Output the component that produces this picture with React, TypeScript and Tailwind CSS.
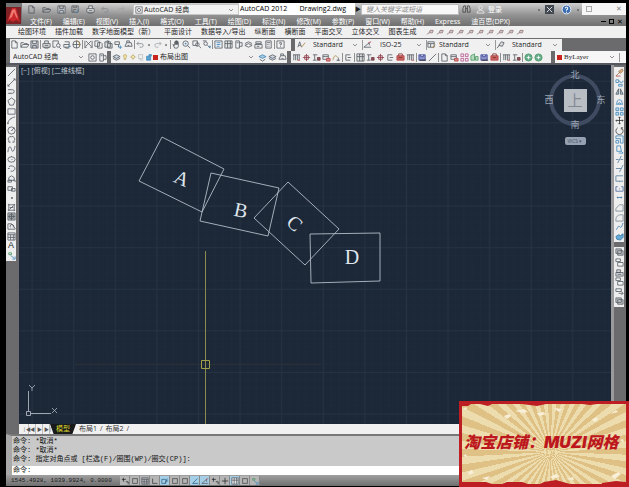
import { useState } from 'react';

type Shape = { d: string; s?: string; f?: string };

const INK = '#555b63';
const BLUE = '#3f86b8';
const RED = '#b8464a';
const GREEN = '#4a9a62';

const icons: Record<string, Shape[]> = {
  new: [{ d: 'M2 1h4l2 2v6H2zM6 1v2h2' }],
  open: [{ d: 'M1 8V3h3l1 1h3v1M1 8l2-3h7L8 8z' }],
  save: [{ d: 'M1 1h8v8H1zM3 1v3h4V1M3 9V6h4v3', f: '#c5c9cf' }],
  saveAs: [{ d: 'M1 1h7v7H1zM3 1v2h3V1M3 8V5h3' }, { d: 'M5 9l4-4', s: BLUE }],
  print: [{ d: 'M1 4h8v4H1zM3 4V1h4v3M3 8v1h4V8M3 6h4', f: '#e3e3e3' }],
  preview: [{ d: 'M1 1h6v3M1 1v7h3' }, { d: 'M5 6a2 2 0 1 0 4 0a2 2 0 1 0-4 0M8 8l2 2' }],
  publish: [{ d: 'M3 2h5v3M2 5h6v3H2zM4 8v1h4' }, { d: 'M7 7h3', s: BLUE }],
  globe: [{ d: 'M1 5a4 4 0 1 0 8 0a4 4 0 1 0-8 0M5 1v8M1 5h8' }, { d: 'M5 1a4 4 0 0 1 3 6', s: '#b08a3a' }],
  cut: [{ d: 'M2 1l6 6M8 1L2 7M1 8h2M7 8h2M1 1v8M9 1v8' }],
  copy: [{ d: 'M1 1h4l1 1v5H1zM4 3h4l1 1v5H4z' }],
  paste: [{ d: 'M1 2h6v6H1zM3 1h2v2H3M4 4h5v5H4z', f: '#dedede' }],
  match: [{ d: 'M1 2h5v3H1zM5 5v3' }, { d: 'M5 8h4M7 6v4', s: BLUE }],
  block: [{ d: 'M1 7l2-4h5l1 4zM3 3V1h3v2M4 6h2' }],
  undo: [{ d: 'M3 2L1 4l2 2M1 4h5a2 2 0 0 1 0 4H4', s: '#85898e' }],
  redo: [{ d: 'M7 2l2 2-2 2M9 4H4a2 2 0 0 0 0 4h2', s: '#a3a6aa' }],
  drop: [{ d: 'M3 4h4L5 7z', f: '#444', s: 'none' }],
  pan: [{ d: 'M3 9L1 5l2 1V2h1v3V1h1v4V1h1v4V2h1v5L6 9z' }],
  zoom: [{ d: 'M1 4a3 3 0 1 0 6 0a3 3 0 1 0-6 0M6 6l3 3' }, { d: 'M3 4h2M4 3v2', s: BLUE }],
  zoomWin: [{ d: 'M1 1h5v5H1zM4 5a2 2 0 1 0 4 0a2 2 0 1 0-4 0M8 7l2 2' }],
  zoomPrev: [{ d: 'M2 4a2 2 0 1 0 4 0a2 2 0 1 0-4 0M6 6l3 3M1 1h4' }, { d: 'M7 7h3v2', s: BLUE }],
  props: [{ d: 'M1 1h8v8H1z', f: '#e9eef4' }, { d: 'M3 3h4M3 5h4M3 7h3', s: BLUE }],
  sheet: [{ d: 'M1 1h8v8H1zM1 4h8M4 1v8M7 1v8', f: '#e4e4e4' }],
  palette: [{ d: 'M2 1h4v8H2zM6 3h3v4H6M3 3h2' }],
  sheets: [{ d: 'M1 6l4-2 4 2-4 2zM1 4l4-2 4 2' }],
  markup: [{ d: 'M2 2h6v2H2zM1 5h8v4H1zM3 7h3' }],
  calc: [{ d: 'M2 1h6v8H2zM3 3h4M3 5h1M5 5h1M3 7h1M5 7h1' }],
  help: [{ d: 'M1 1h8v8H1zM4 4V3h2v2H5v1M5 7v1' }],
  text: [{ d: 'M1 8l2-6 2 6M2 6h2' }, { d: 'M5 8l4-5', s: '#a8813c' }],
  dim: [{ d: 'M1 8h8M1 8l6-5M7 3v3' }, { d: 'M6 3l3-1', s: RED }],
  table: [{ d: 'M1 2h7v6H1zM1 4h7M4 4v4' }, { d: 'M6 9l3-4', s: '#a8813c' }],
  leader: [{ d: 'M1 9l3-3M3 6l3-4 3 1-2 4z', f: '#ddd' }],
  gear: [{ d: 'M1 1h8v8H1zM3 5a2 2 0 1 0 4 0a2 2 0 1 0-4 0' }],
  layers: [{ d: 'M1 4l4-2 4 2-4 2zM1 6l4 2 4-2', f: '#cfd8e2' }],
  bulb: [{ d: 'M3 4a2 2 0 1 1 4 0L6 6v2H4V6z', s: '#b6a15a', f: '#f4e8ad' }],
  sun: [{ d: 'M3 5a2 2 0 1 0 4 0a2 2 0 1 0-4 0M5 1v1M5 8v1M1 5h1M8 5h1', s: '#b6a15a', f: '#f7ecb9' }],
  freeze: [{ d: 'M2 2h5v5H2zM4 7v2h4', s: '#b5b9bd' }],
  lock: [{ d: 'M2 4h5v5H2zM5 4V2h3v2', s: BLUE, f: '#5aa2d0' }],
  layPrev: [{ d: 'M1 4l4-2 4 2-4 2z', s: BLUE, f: '#a7cbe2' }, { d: 'M2 7l3 2 3-2' }],
  mkRed: [{ d: 'M1 2h6v5H1zM1 4h6', s: INK }, { d: 'M5 6h4v3H5z', s: RED, f: '#d98a88' }],
  mkFill: [{ d: 'M1 3h8v5H1z', s: RED, f: '#c9625d' }, { d: 'M3 3V1h4v2M3 5h4', s: '#7a2e2c' }],
  mkBars: [{ d: 'M1 2h8M2 2v6M4 2v6M6 2v6M8 2v6', s: INK }, { d: 'M6 8h3', s: RED }],
  mkCross: [{ d: 'M5 1v8M1 5h8M3 3h4v4H3z', s: '#8f3d4a' }],
  mkGreen: [{ d: 'M1 8V3l4-2v7zM6 8V4h3v4z', s: GREEN, f: '#b7d8c1' }],
  mkCurve: [{ d: 'M1 8c1-6 4-6 5-3', s: '#ad8c4a' }, { d: 'M5 8h4M7 5v4', s: INK }],
  mkText: [{ d: 'M1 2h5M3 2v6M1 8h4', s: INK }, { d: 'M6 5h3v3H6z', s: '#6b3c44', f: '#9a5058' }],
  mkFrame: [{ d: 'M7 2H2v6h5M4 5h4', s: INK }],
  mkPink: [{ d: 'M1 1h3v3H1zM6 1h3v3H6zM1 6h3v3H1zM6 6h3v3H6z', s: '#b7578f' }],
  mkBlue: [{ d: 'M1 2h7v6H1zM3 2v2h3V2', s: '#3d4696', f: '#8d94cd' }, { d: 'M2 8h7', s: '#222' }],
  mkDisc: [{ d: 'M1 5a4 4 0 1 0 8 0a4 4 0 1 0-8 0', s: GREEN, f: '#68ad8e' }, { d: 'M3 5h4M5 3v4', s: '#fff' }],
  line: [{ d: 'M1 9l8-8' }],
  xline: [{ d: 'M1 9l8-8M1 7v2h2M7 1h2v2' }],
  pline: [{ d: 'M1 3h5a2 2 0 0 1 0 4H3M1 7h3' }],
  polygon: [{ d: 'M5 1l4 3-2 5H3L1 4z' }],
  rect: [{ d: 'M1 2h8v6H1z' }],
  arc: [{ d: 'M1 9c0-5 4-7 8-8M1 7v2M4 3h1' }],
  circle: [{ d: 'M1 5a4 4 0 1 0 8 0a4 4 0 1 0-8 0M5 5l3-3M5 5h1' }],
  cloud: [{ d: 'M2 8V6a2 2 0 0 1 0-3a2 2 0 0 1 3-1a2 2 0 0 1 3 1a2 2 0 0 1 0 3v2H6M4 8H2' }],
  spline: [{ d: 'M1 8c1-8 3-7 4-3s3 2 4-4' }],
  ellipse: [{ d: 'M1 5a4 3 0 1 0 8 0a4 3 0 1 0-8 0M5 1v1M5 5h1' }],
  earc: [{ d: 'M2 3a4 3 0 1 1 2 5M1 5h2' }],
  insert: [{ d: 'M2 7V4l3-2 3 2v3zM1 7h4v2H1zM7 7h2v2' }],
  mkBlock: [{ d: 'M1 3h5v4H1zM5 5h4v3H5z' }],
  point: [{ d: 'M5 5h1v1H5z', f: INK }],
  hatch: [{ d: 'M1 2h8M1 8h8M2 1v8M8 1v8M3 5h4M3 7l4-4' }],
  gradient: [{ d: 'M1 1h8v8H1zM3 3h4v4H3zM1 5h8M5 1v8', f: '#b5b8bc' }],
  region: [{ d: 'M1 8V2h4l4 5v1zM4 6a2 2 0 1 1 3 0' }],
  grid: [{ d: 'M1 1h8v8H1zM1 3h8M1 6h8M4 3v6M7 3v6' }],
  addSel: [{ d: 'M2 2h3v2H2z', s: GREEN }, { d: 'M4 5l4 3M6 9h3V6', s: BLUE }],
  erase: [{ d: 'M1 9l5-5M4 4l4-3 1 2-3 3z', s: '#a0754b', f: '#dfb48e' }, { d: 'M1 9h5', s: RED }],
  copyObj: [{ d: 'M1 2h3v3H1zM5 3a2 2 0 1 0 4 0M4 7h4v2H4z', s: BLUE }],
  mirror: [{ d: 'M4 2v6H1zM6 2v6h3z', s: INK, f: '#a9c6dc' }],
  offset: [{ d: 'M1 8h8M2 8a3 5 0 0 1 6 0M4 8a1 2 0 0 1 2 0', s: BLUE }],
  array: [{ d: 'M1 1h3v3H1zM6 1h3v3H6zM1 6h3v3H1zM6 6h3v3H6z', s: BLUE, f: '#cfe3f1' }],
  move: [{ d: 'M5 1v8M1 5h8M4 2l1-1 1 1M4 8l1 1 1-1M2 4L1 5l1 1M8 4l1 1-1 1', s: '#333' }],
  rotate: [{ d: 'M3 2a4 4 0 1 0 4 0M7 2v2M7 2h2', s: '#444' }],
  scale: [{ d: 'M1 1h8v8H6V4H1zM1 6h3v3H1z', s: BLUE }],
  stretch: [{ d: 'M2 1h4l1 6H2zM4 9h5M7 7l2 2', s: BLUE }],
  trim: [{ d: 'M1 5h3M6 5h3M3 9l4-8', s: '#547a98' }],
  extend: [{ d: 'M1 5h6M5 9l4-8', s: '#547a98' }],
  breakAt: [{ d: 'M1 2h8M1 2v6h8M5 8v1', s: '#547a98' }],
  breakObj: [{ d: 'M1 3v5h8V3M1 3h2M7 3h2M5 5v1', s: '#48659c' }],
  join: [{ d: 'M2 5h6M3 4v2M7 4v2', s: '#3b78a8' }],
  chamfer: [{ d: 'M1 9V6l4-4h4v7z', s: '#7b8894' }],
  fillet: [{ d: 'M1 9V7a5 5 0 0 1 5-5h3v7z', s: '#7b8894' }],
  blend: [{ d: 'M1 8c2 1 2-5 4-3s2 1 4-4', s: '#3b78a8' }],
  explode: [{ d: 'M1 5l3-2 2 1 3-2v4L6 9 2 8z', s: '#2f78aa', f: '#6aa9d4' }],
  order1: [{ d: 'M1 1h6v5H1zM3 3h6v5H3z', f: '#c4c6ca' }],
  order2: [{ d: 'M1 1h5v3H1zM3 5h6v4H3z', f: '#f5f5f5' }],
  order3: [{ d: 'M2 2h4v3H2zM1 5h8v4H1zM3 7h4', f: '#d6d8db' }],
  annot: [{ d: 'M1 2h6v3H1zM4 7h5M7 5l2 2-2 2' }],
  pin: [{ d: 'M1 8l3-2M4 6l1-3h4L8 6z', s: '#8a6f70', f: '#d6c7c7' }],
  binoc: [{ d: 'M1 8V4l1-3h2v7zM6 8V1h2l1 3v4zM4 4h2', s: '#444' }],
  user: [{ d: 'M3 3a2 2 0 1 0 4 0a2 2 0 1 0-4 0M1 9c0-4 8-4 8 0z', s: '#eee' }],
  exch: [{ d: 'M0 0h10v10H0z', s: 'none', f: '#3f464e' }, { d: 'M2 2l6 6M8 2L2 8', s: '#fff' }],
  helpRound: [{ d: 'M1 5a4 4 0 1 0 8 0a4 4 0 1 0-8 0', s: '#e8eef8', f: '#3c6eb0' }, { d: 'M4 4V3h2v2H5v1M5 7v1', s: '#fff' }],
  snap: [{ d: 'M3 1v5M1 3h5M6 6h3v3', s: '#222' }],
  ortho: [{ d: 'M2 2v6h6', s: '#333' }],
  square: [{ d: 'M2 2h6v6H2z', s: '#444' }],
  osnap: [{ d: 'M1 3h5v5H1zM5 8l3-6M6 5h3', s: '#2b5f85' }],
  angle: [{ d: 'M8 2L2 8h7', s: '#2b5f85' }],
  plus: [{ d: 'M5 1v8M1 5h8', s: '#222' }],
};

function Icon({ name, size = 'size-[9px]' }: { name: string; size?: string }) {
  return (
    <svg viewBox="0 0 10 10" className={`${size} shrink-0`} aria-hidden="true">
      {icons[name].map((p, i) => (
        <path key={i} d={p.d} stroke={p.s ?? INK} fill={p.f ?? 'none'} strokeWidth="0.9" />
      ))}
    </svg>
  );
}

function Tool({ name, size, className = '' }: { name: string; size?: string; className?: string }) {
  return (
    <button type="button" aria-label={name} className={`flex shrink-0 items-center justify-center ${className}`}>
      <Icon name={name} size={size} />
    </button>
  );
}

// '|' in a tool list draws a divider
function ToolRun({ tools }: { tools: string[] }) {
  return (
    <div className="flex items-center gap-px">
      {tools.map((t, i) =>
        t === '|' ? (
          <span key={i} className="h-[9px] w-px bg-[#8f8f8f]" />
        ) : (
          <Tool key={i} name={t} size={t === 'drop' ? 'size-[6px]' : undefined} />
        ),
      )}
    </div>
  );
}

function Combo({ label, value, className = '' }: { label: string; value: string; className?: string }) {
  return (
    <div className={`flex items-center pr-1 ${className}`}>
      <select aria-label={label} className="w-full min-w-0 appearance-none bg-transparent text-[7px] leading-[10px] outline-none">
        <option>{value}</option>
      </select>
      <svg viewBox="0 0 6 4" className="h-1 w-[6px] shrink-0" aria-hidden="true">
        <path d="M1 1l2 2 2-2" fill="none" stroke="#777" strokeWidth="0.8" />
      </svg>
    </div>
  );
}

const quickTools = ['new', 'open', 'save', 'saveAs', 'print', 'undo', 'redo'];

const menus = ['文件(F)', '编辑(E)', '视图(V)', '插入(I)', '格式(O)', '工具(T)', '绘图(D)', '标注(N)', '修改(M)', '参数(P)', '窗口(W)', '帮助(H)', 'Express', '迪百思(DPX)'];

const plugins = ['绘图环境', '插件加载', '数字地面模型（新）', '平面设计', '数据导入/导出', '纵断面', '横断面', '平面交叉', '立体交叉', '图表生成'];

const standardTools = ['new', 'open', 'save', '|', 'print', 'preview', 'publish', 'globe', '|', 'cut', 'copy', 'paste', 'match', 'block', '|', 'undo', 'drop', 'redo', 'drop', '|', 'pan', 'zoom', 'zoomWin', 'zoomPrev', '|', 'props', 'sheet', 'palette', 'sheets', 'markup', 'calc', '|', 'help'];

const roadTools = ['mkBars', 'mkCross', 'mkText', 'mkRed', 'mkCurve', '|', 'mkFrame', '|', 'sheet', 'mkText', 'mkCross', 'mkFrame', 'mkFill', 'mkBars', '|', 'mkBlue', 'line', '|', 'new', 'mkRed', 'mkPink', 'mkGreen', 'mkBlue', 'mkFill', '|', 'mkBars', 'mkText', '|', 'mkDisc', 'mkDisc'];

const drawTools = ['line', 'xline', 'pline', 'polygon', 'rect', 'arc', 'circle', 'cloud', 'spline', 'ellipse', 'earc', 'insert', 'mkBlock', 'point', 'hatch', 'gradient', 'region', 'grid'];

const modifyTools = ['erase', 'copyObj', 'mirror', 'offset', 'array', 'move', 'rotate', 'scale', 'stretch', 'trim', 'extend', 'breakAt', 'breakObj', 'join', 'chamfer', 'fillet', 'blend', 'explode'];

const statusTools = [
  { name: 'snap', on: false },
  { name: 'square', on: false },
  { name: 'grid', on: false },
  { name: 'ortho', on: false },
  { name: 'osnap', on: true },
  { name: 'square', on: false },
  { name: 'square', on: false },
  { name: 'angle', on: true },
  { name: 'dim', on: true },
  { name: 'snap', on: false },
  { name: 'plus', on: false },
  { name: 'sheet', on: true },
  { name: 'square', on: false },
  { name: 'addSel', on: false },
];

const plots = [
  { id: 'A', points: '143,72 205,104 183,147 120,116', x: 163, y: 113, turn: 24 },
  { id: 'B', points: '192,108 260,123 249,171 181,156', x: 222, y: 145, turn: 12 },
  { id: 'C', points: '269,117 320,164 286,200 235,153', x: 276, y: 158, turn: 42 },
  { id: 'D', points: '291,169 361,168 361,216 292,218', x: 333, y: 192, turn: 0 },
];

function TitleBar() {
  return (
    <div className="flex h-[13px] items-center bg-linear-to-b from-[#cfcfcf] to-[#8e8e8e]">
      <div className="flex w-[111px] shrink-0 items-center justify-between pr-2 pl-[5px]">
        {quickTools.map((t) => (
          <Tool key={t} name={t} />
        ))}
      </div>
      <div className="flex h-[11px] w-[106px] shrink-0 items-center gap-px border border-[#c5c5c5] bg-[#f1f1f1] pl-px">
        <Icon name="gear" size="size-[8px]" />
        <Combo label="工作空间" value="AutoCAD 经典" className="w-full" />
      </div>
      <div className="flex h-[12px] w-[116px] shrink-0 items-center justify-between self-start bg-white pr-[9px] pl-px text-[7px] leading-[10px] whitespace-nowrap text-black">
        <span>AutoCAD 2012</span>
        <span>Drawing2.dwg</span>
      </div>
      <span className="w-[6px] shrink-0 text-center text-[6px]">▶</span>
      <input
        aria-label="搜索"
        placeholder="键入关键字或短语"
        className="h-[11px] w-[98px] shrink-0 border border-[#bbb] bg-[#f8f8f8] pl-1 text-[7px] italic outline-none placeholder:text-[#8b8b8b]"
      />
      <div className="flex flex-1 items-center pl-[3px]">
        <Tool name="binoc" />
        <a href="#login" className="ml-[5px] flex items-center gap-[3px] text-[7px] leading-[9px] text-white">
          <Icon name="user" />
          登录
        </a>
        <div className="mr-px ml-auto flex items-center gap-[3px]">
          <Tool name="drop" size="size-[6px]" />
          <Tool name="exch" />
          <Tool name="helpRound" size="ml-1 size-[11px]" />
          <Tool name="drop" size="size-[6px]" />
        </div>
      </div>
      <div className="flex h-[12px] w-[44px] shrink-0 items-center justify-between self-start bg-[#f6f6f6] px-[4px] text-[#888]">
        <button type="button" aria-label="最大化" className="size-[6px] border border-[#aaa]" />
        <button type="button" aria-label="关闭" className="text-[7px] leading-[10px]">✕</button>
      </div>
    </div>
  );
}

function MenuBar() {
  return (
    <nav className="flex h-[10px] items-center justify-between bg-linear-to-b from-[#8f8f8f] to-[#6f6f6f] pr-[3px] pl-[8px] text-[7px] leading-[9px] text-white">
      <div className="flex gap-[11px]">
        {menus.map((m) => (
          <button key={m} type="button" className="whitespace-nowrap">{m}</button>
        ))}
      </div>
      <div className="flex items-center gap-[3px] text-black">
        <button type="button" aria-label="最小化" className="h-px w-[5px] bg-black" />
        <button type="button" aria-label="还原" className="size-[5px] border border-black" />
        <button type="button" aria-label="关闭文档">✕</button>
      </div>
    </nav>
  );
}

function DrawingArea() {
  return (
    <main className="relative min-h-[359px] min-w-0 flex-1 overflow-hidden bg-[#1c2737]">
      <svg className="absolute inset-0 size-full" aria-label="图形">
        <defs>
          <pattern id="minor" width="8.3" height="8.3" x="4.3" y="7.6" patternUnits="userSpaceOnUse">
            <path d="M0.5 0v8.3M0 0.5h8.3" stroke="#1e2a3a" fill="none" />
          </pattern>
          <pattern id="major" width="41.6" height="41.6" x="12.6" y="15.8" patternUnits="userSpaceOnUse">
            <path d="M0.5 0v41.6M0 0.5h41.6" stroke="#243242" fill="none" />
          </pattern>
        </defs>
        <rect width="100%" height="100%" fill="url(#minor)" />
        <rect width="100%" height="100%" fill="url(#major)" />
        {plots.map((p) => (
          <g key={p.id}>
            <polygon points={p.points} fill="none" stroke="#b3bcc7" strokeWidth="0.9" />
            <text
              x={p.x}
              y={p.y}
              transform={`rotate(${p.turn} ${p.x} ${p.y})`}
              textAnchor="middle"
              dominantBaseline="central"
              className="fill-[#dfe5ec] font-['Liberation_Serif',serif] text-[20px]"
            >
              {p.id}
            </text>
          </g>
        ))}
        <path d="M56 299.5h246" stroke="#2a3034" />
        <path d="M186.5 186v400" stroke="#8b8b4c" />
        <path d="M182.5 295.5h8v8h-8z" fill="none" stroke="#a3a04a" />
      </svg>

      <span className="absolute top-px left-[2px] text-[7px] leading-[9px] text-[#c3cad3]">[−] [俯视] [二维线框]</span>

      <svg viewBox="0 0 36 36" className="absolute bottom-[5px] left-[5px] size-[36px]" aria-label="坐标系">
        <path d="M4.500 8v20M7 30.500h20M2.500 28.500h4v4h-4z" fill="none" stroke="#aeb6c0" strokeWidth="0.9" />
        <path d="M5 2l3 3 3-3M8 5v3M28 25l5 5M33 25l-5 5" fill="none" stroke="#aeb6c0" strokeWidth="0.8" />
      </svg>

      <div className="absolute top-[5px] right-[5px] grid w-[62px] grid-cols-[10px_42px_10px] items-center justify-items-center text-[9px] leading-[10px] text-[#9aa5b3]">
        <span className="z-10 col-start-2">北</span>
        <span className="z-10 col-start-1">西</span>
        <div className="-my-[6px] flex size-[52px] items-center justify-center rounded-full border-[4px] border-[#3f4b60]">
          <button type="button" className="size-[23px] bg-[#b9bdc4] text-[15px] leading-[20px] text-[#838993]">上</button>
        </div>
        <span className="z-10">东</span>
        <span className="z-10 col-start-2">南</span>
        <button type="button" className="col-start-2 mt-[7px] h-[8px] w-[21px] rounded-[2px] bg-[#96a1b1] text-[5px] leading-[8px] text-[#4d596a]">WCS ▾</button>
      </div>
    </main>
  );
}

function Banner() {
  return (
    <aside className="absolute right-0 bottom-0 h-[86px] w-[170px] overflow-hidden border-3 border-[#bd1e24] bg-[repeating-conic-gradient(from_2deg_at_54%_60%,#ecdcae_0deg_5deg,#dfc085_5deg_10deg)]">
      <svg viewBox="0 0 164 80" className="absolute inset-0 size-full" aria-hidden="true">
        <path
          d="M2 4l2-1 1 2-2 1zM42 12l5-2 2 2-4 3zM53 7l9-2 4 3-5 1zM75 9l6-1 3 2-7 2zM92 4l8 1-3 3zM130 16l4-3 2 2-3 3zM148 10l6-4 2 2zM6 68l4-2 2 3-5 2zM20 74l8-2-3 4zM88 73l6-3 4 2-7 3zM104 75l7-2 1 3zM149 72l7-4 3 2-6 5zM1 52l3-2 1 3zM158 36l3-1 1 4z"
          fill="#f8efd8"
        />
        <path d="M0 0h9l-3 2H0zM18 0h12l-4 2zM60 0h24l-9 2zM120 0h15l-7 1zM0 78h24l6 2H0zM45 78h15l6 2H40zM82 78l12-2 14 4H78zM140 79l14-2 10 1v2h-24z" fill="#bd1e24" />
      </svg>
      <p className="relative pt-[27px] pl-[2px] font-['Inter','Noto_Sans_CJK_SC',sans-serif] text-[16px] leading-[22px] font-black whitespace-nowrap text-[#bd171d] italic">
        淘宝店铺：MUZI网格
      </p>
    </aside>
  );
}

export default function App() {
  const [tab, setTab] = useState('模型');
  const [command, setCommand] = useState('');

  return (
    <div className="relative flex min-h-screen flex-col overflow-hidden bg-black pt-[3px] pr-[3px] pl-[6px] font-['Open_Sans','Noto_Sans_CJK_SC',sans-serif] text-[#1f1f1f]">
      <header>
        <div className="flex">
          <button type="button" aria-label="应用程序菜单" className="flex w-[16px] shrink-0 items-center justify-center bg-[#747474]">
            <svg viewBox="0 0 16 20" className="h-[20px] w-[16px]" aria-hidden="true">
              <path d="M0 2h15v17H0z" fill="#7e2024" />
              <path d="M1 17L6 3h4l4 14-4-2-3 2-3-2z" fill="#c8282c" />
              <path d="M6 5l-3 9 3-2 2-5 2 5 2 2L9 4z" fill="#f07a72" />
            </svg>
          </button>
          <div className="min-w-0 flex-1">
            <TitleBar />
            <MenuBar />
          </div>
        </div>

        <div className="flex h-[12px] items-center bg-[#f1f0f1] pl-[12px] text-[7px] leading-[10px]">
          <nav className="flex gap-[9px]">
            {plugins.map((p) => (
              <button key={p} type="button" className="whitespace-nowrap">{p}</button>
            ))}
          </nav>
          <div className="ml-[9px] flex items-center gap-[2px]">
            {Array.from({ length: 10 }, (_, i) => (
              <Tool key={i} name="pin" size="size-[8px]" />
            ))}
          </div>
        </div>

        <div className="flex h-[13px] items-center gap-[4px] bg-[#6b6b6d] pl-[4px]">
          <div className="flex h-[12px] w-[281px] shrink-0 items-center bg-[#f0f0f1]">
            <ToolRun tools={standardTools} />
          </div>
          <div className="flex h-[12px] items-center bg-[#f0f0f1] pl-[2px]">
            <Icon name="text" />
            <Combo label="文字样式" value="Standard" className="w-[57px] border-r border-[#999] pl-[7px]" />
            <Icon name="dim" />
            <Combo label="标注样式" value="ISO-25" className="w-[55px] border-r border-[#999] pl-[8px]" />
            <Icon name="table" />
            <Combo label="表格样式" value="Standard" className="w-[60px] border-r border-[#999] pl-[3px]" />
            <Icon name="leader" />
            <Combo label="多重引线样式" value="Standard" className="w-[57px] pl-[7px]" />
          </div>
        </div>

        <div className="flex h-[14px] items-center gap-[4px] border-b-2 border-[#55585e] bg-[#6b6b6d] pl-[4px]">
          <div className="flex h-[12px] w-[97px] shrink-0 items-center bg-[#f0f0f1] pl-[3px]">
            <Combo label="工作空间切换" value="AutoCAD 经典" className="w-[75px]" />
            <ToolRun tools={['gear', 'palette']} />
          </div>
          <div className="flex h-[12px] w-[176px] shrink-0 items-center bg-[#f0f0f1] pl-px">
            <Icon name="layers" />
            <div className="flex flex-1 items-center">
              <Icon name="bulb" size="size-[8px]" />
              <Icon name="sun" size="size-[8px]" />
              <Icon name="freeze" size="size-[8px]" />
              <Icon name="lock" size="size-[8px]" />
              <span className="mr-[2px] size-[5px] shrink-0 bg-[#c8231e]" />
              <Combo label="图层" value="布局出图" className="flex-1" />
            </div>
            <ToolRun tools={['layPrev', 'layers', 'block']} />
          </div>
          <div className="flex h-[12px] w-[260px] shrink-0 items-center bg-[#f0f0f1] pl-px">
            <ToolRun tools={roadTools} />
          </div>
          <div className="flex h-[12px] min-w-0 flex-1 items-center bg-[#f6f6f6] pl-[2px] font-['Liberation_Serif',serif]">
            <span className="mr-[2px] size-[5px] shrink-0 bg-[#c8231e]" />
            <Combo label="颜色" value="ByLayer" className="flex-1" />
            <span className="mr-[6px] h-[9px] w-px bg-[#999]" />
          </div>
        </div>
      </header>

      <div className="flex flex-1">
        <div className="flex w-[13px] shrink-0 flex-col bg-[#6b6b6d] pt-[2px] pr-[3px]">
          <div className="flex h-[194px] flex-col items-center justify-between bg-[#eeeeef] py-px">
            {drawTools.map((t) => (
              <Tool key={t} name={t} />
            ))}
            <button type="button" aria-label="多行文字" className="h-[9px] font-['Liberation_Sans',sans-serif] text-[9px] leading-[9px]">A</button>
            <Tool name="addSel" />
          </div>
        </div>
        <div className="flex min-w-0 flex-1 flex-col">
          <DrawingArea />
          <div className="flex h-[10px] items-center bg-[#f0f0f1] pl-[4px] text-[7px] leading-[10px]">
            <div className="flex gap-px text-[5px] text-[#555]">
              {['|◀', '◀', '▶', '▶|'].map((s) => (
                <button key={s} type="button" className="w-[6px] border-r border-[#bbb] whitespace-nowrap">{s}</button>
              ))}
            </div>
            {['模型', '布局1', '布局2'].map((t) => (
              <button
                key={t}
                type="button"
                onClick={() => setTab(t)}
                className={
                  tab === t
                    ? 'h-[10px] bg-[#17191a] px-[6px] text-[#d9d431] [clip-path:polygon(0_0,100%_0,86%_100%,14%_100%)]'
                    : 'flex h-[10px] items-center pl-[3px] text-[#333]'
                }
              >
                {t}
                {tab !== t && <span className="pl-[3px]">/</span>}
              </button>
            ))}
          </div>
        </div>
        <div className="flex w-[15px] shrink-0 flex-col gap-[5px] border-l-3 border-[#9a9a9d] bg-[#6b6b6d] pt-[2px] pr-[2px]">
          <div className="flex h-[175px] flex-col items-center justify-between bg-[#eeeeef] py-px">
            {modifyTools.map((t) => (
              <Tool key={t} name={t} />
            ))}
          </div>
          <div className="flex h-[60px] flex-col items-center justify-between bg-[#eeeeef] py-px">
            {['order1', 'order2', 'order3', 'order2', 'annot', 'order1'].map((t, i) => (
              <Tool key={i} name={t} />
            ))}
          </div>
        </div>
      </div>

      <section className="border-t-2 border-l-[6px] border-t-[#77777a] border-l-[#a8a8a8] bg-[#c9c9c9] font-['Liberation_Mono','Noto_Sans_CJK_SC',monospace] text-[7px] leading-[9px] text-[#111]">
        <div className="h-[30px] pt-px pl-px">
          <p>命令: *取消*</p>
          <p>命令: *取消*</p>
          <p>命令: 指定对角点或 [栏选(F)/圈围(WP)/圈交(CP)]:</p>
        </div>
        <label className="flex h-[9px] items-center gap-1 bg-white pl-px">
          命令:
          <input value={command} onChange={(e) => setCommand(e.target.value)} className="h-[8px] flex-1 outline-none" />
        </label>
      </section>

      <footer className="mb-px flex h-[11px] items-center bg-linear-to-b from-[#a0a0a0] to-[#6f6f6f] pl-[5px]">
        <span className="w-[109px] shrink-0 font-['Liberation_Mono',monospace] text-[6px] leading-[9px] whitespace-nowrap text-[#1c1c1c]">1545.4928, 1039.9924, 0.0000</span>
        <div className="flex">
          {statusTools.map((t, i) => (
            <Tool
              key={i}
              name={t.name}
              size="size-[8px]"
              className={t.on ? 'h-[9px] w-[10px] border-r border-[#888] bg-[#a5cfe6]' : 'h-[9px] w-[10px] border-r border-[#888] bg-[#b5b5b5]'}
            />
          ))}
        </div>
      </footer>

      <Banner />
    </div>
  );
}
